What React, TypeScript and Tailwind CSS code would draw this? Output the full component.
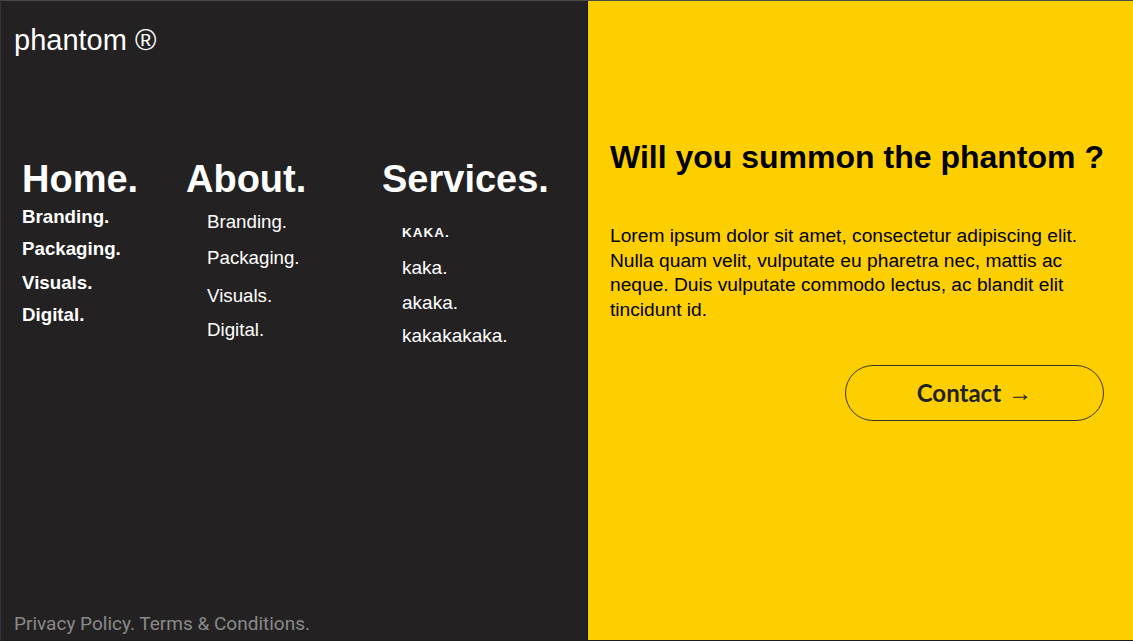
import React from "react";

const sans = { fontFamily: '"Liberation Sans", Arial, sans-serif' };

export default function App() {
  return (
    <div
      className="flex h-[641px] w-[1133px] overflow-hidden border-t border-l border-b border-t-[#4a4a4a] border-l-[#363636] border-b-[#1c1c1c] bg-[#232122]"
      style={sans}
    >
      {/* Left panel */}
      <div className="flex w-[587px] shrink-0 flex-col border-r border-r-[#121212] bg-[#232122] pl-[13px] pb-[5px] text-white">
        <div className="pt-[22px] text-[29px] leading-[34px]">phantom ®</div>

        <div className="ml-[8px] mt-[100px] flex">
          <div className="flex w-[164px] flex-col">
            <h2 className="text-[38px] font-bold leading-[44px]">Home.</h2>
            <ul className="text-[18.72px] font-bold leading-[32px]">
              <li>Branding.</li>
              <li>Packaging.</li>
              <li className="pt-[2px]">Visuals.</li>
              <li>Digital.</li>
            </ul>
          </div>
          <div className="flex w-[196px] flex-col">
            <h2 className="text-[38px] font-bold leading-[44px]">About.</h2>
            <ul className="mt-[3px] pl-[21px] text-[18.72px] leading-[36px]">
              <li>Branding.</li>
              <li>Packaging.</li>
              <li className="pt-[2px]">Visuals.</li>
              <li className="-mt-[2px]">Digital.</li>
            </ul>
          </div>
          <div className="flex flex-col">
            <h2 className="text-[38px] font-bold leading-[44px]">Services.</h2>
            <ul className="mt-[14px] pl-[20px] text-[19px]">
              <li className="h-[35px] text-[13.5px] font-bold leading-[35px] tracking-[1px]">KAKA.</li>
              <li className="h-[35px] leading-[35px]">kaka.</li>
              <li className="h-[35px] leading-[35px]">akaka.</li>
              <li className="h-[32px] leading-[32px]">kakakakaka.</li>
            </ul>
          </div>
        </div>

        <div
          className="mt-auto text-[19px] leading-[22px] text-[#8a8a8a]"
          style={{ fontFamily: 'Roboto, "Liberation Sans", sans-serif' }}
        >
          Privacy Policy. Terms &amp; Conditions.
        </div>
      </div>

      {/* Right panel */}
      <div className="flex flex-1 flex-col bg-[#fecf00] pl-[22px] pr-[31px] pt-[138px] text-black">
        <h1 className="whitespace-nowrap text-[32px] font-bold leading-[37px]">Will you summon the phantom ?</h1>
        <p className="mt-[48px] w-[493px] text-[19.2px] leading-[24.67px]">
          Lorem ipsum dolor sit amet, consectetur adipiscing elit. Nulla quam velit, vulputate eu pharetra nec,
          mattis ac neque. Duis vulputate commodo lectus, ac blandit elit tincidunt id.
        </p>
        <div className="mt-[42px] flex justify-end">
          <button
            className="flex h-[56px] w-[259px] items-center justify-center rounded-full border border-[#3a3520] text-[24px] font-bold text-[#222]"
            style={{ fontFamily: 'Lato, "Open Sans", sans-serif' }}
          >
            Contact
            <span
              className="ml-[7px] font-normal"
              style={{ fontFamily: '"Liberation Sans", sans-serif', fontSize: 24 }}
            >
              →
            </span>
          </button>
        </div>
      </div>
    </div>
  );
}
